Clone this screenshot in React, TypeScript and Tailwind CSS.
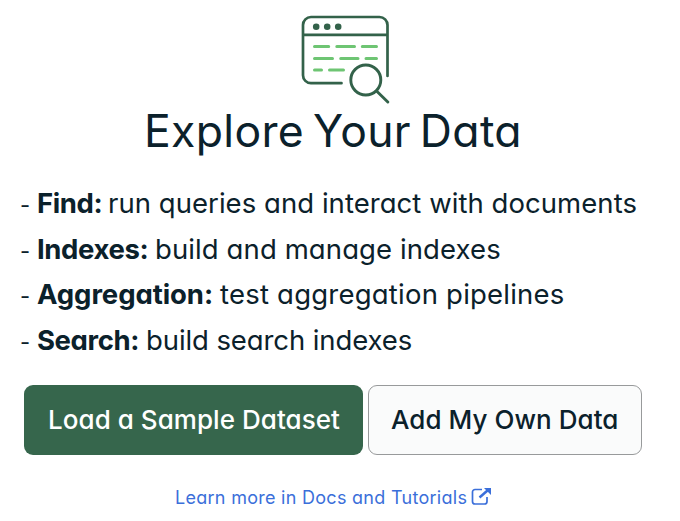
import React from 'react';

const features = [
  { name: 'Find:', text: 'run queries and interact with documents', nameClass: 'w-[71px] tracking-[-0.4px]', textClass: 'tracking-[0.05px]' },
  { name: 'Indexes:', text: 'build and manage indexes', nameClass: 'w-[118px] tracking-[-0.4px]', textClass: 'tracking-[0.1px]' },
  { name: 'Aggregation:', text: 'test aggregation pipelines', nameClass: 'w-[183px] tracking-[-0.08px]', textClass: 'tracking-[0.22px]' },
  { name: 'Search:', text: 'build search indexes', nameClass: 'w-[109px] tracking-[-0.4px]', textClass: 'tracking-[-0.1px]' },
];

function DataIcon() {
  return (
    <svg className="ml-[300px] block h-[90px] w-[90px]" viewBox="300 14 90 90" fill="none" strokeLinecap="round" strokeLinejoin="round">
      <path d="M341.5 83.2H311a8 8 0 0 1-8-8V25a8 8 0 0 1 8-8h68.500a8 8 0 0 1 8 8v51M303 34.800h84.500" stroke="#33624a" strokeWidth="2.700" />
      <g fill="#33624a">
        <circle cx="316.200" cy="26.800" r="3.300" />
        <circle cx="327.200" cy="26.800" r="3.300" />
        <circle cx="338.200" cy="26.800" r="3.300" />
      </g>
      <path d="M314.500 46.600h14.200M336.800 46.600h17.700M362.300 46.600h14.200M314.500 58.400h18M340.700 58.400h17.300M366 58.400h10.500M314.500 70h7M329.500 70h14" stroke="#6ec573" strokeWidth="3" />
      <circle cx="365.800" cy="80" r="15" stroke="#33624a" strokeWidth="2.900" />
      <path d="M376.800 91.200l11 10.800" stroke="#33624a" strokeWidth="2.900" />
    </svg>
  );
}

export default function App() {
  return (
    <main className="h-[521px] w-[680px] overflow-hidden whitespace-nowrap bg-white pt-[14px] font-['Inter','Liberation_Sans',sans-serif] text-[#0b212b] [font-feature-settings:'cv11']">
      <DataIcon />
      <h1 className="ml-[144px] h-[56px] text-[44.5px] leading-[55px] tracking-[0.35px] [word-spacing:-4px]">Explore Your Data</h1>
      <ul className="mt-[21px] ml-[20px]">
        {features.map((f) => (
          <li key={f.name} className="flex h-[45.7px] text-[27.5px] leading-[45.7px]">
            <span className="w-[17px] shrink-0 pt-[2px] text-[22px]">-</span>
            <strong className={`shrink-0 font-bold ${f.nameClass}`}>{f.name}</strong>
            <span className={f.textClass}>{f.text}</span>
          </li>
        ))}
      </ul>
      <div className="mt-[21px] ml-[24px] flex gap-[5px] text-[26px] font-medium">
        <button className="h-[70px] w-[339px] rounded-[9px] bg-[#36664c] pl-[24px] text-left tracking-[0.05px] text-white">Load a Sample Dataset</button>
        <button className="h-[70px] w-[274px] rounded-[9px] border border-[#989a9b] bg-[#fafbfb] pl-[22px] text-left tracking-[0.05px]">Add My Own Data</button>
      </div>
      <a className="mt-[30px] ml-[175px] flex h-[26px] text-[18px] leading-[26px] text-[#3b6fda]">
        <span className="w-[296px] tracking-[0.28px]">Learn more in Docs and Tutorials</span>
        <svg className="mt-[2px] h-[20px] w-[21px]" viewBox="0 0 21 20" fill="none" stroke="currentColor" strokeWidth="1.700">
          <path d="M11 2.500H4a2.500 2.500 0 0 0-2.500 2.500v9.500A2.500 2.500 0 0 0 4 17h9.500a2.500 2.500 0 0 0 2.500-2.500V10" />
          <path d="M8.500 10.500l8-7" strokeWidth="2.500" />
          <path d="M13 1h7v7z" fill="currentColor" stroke="none" />
        </svg>
      </a>
    </main>
  );
}
